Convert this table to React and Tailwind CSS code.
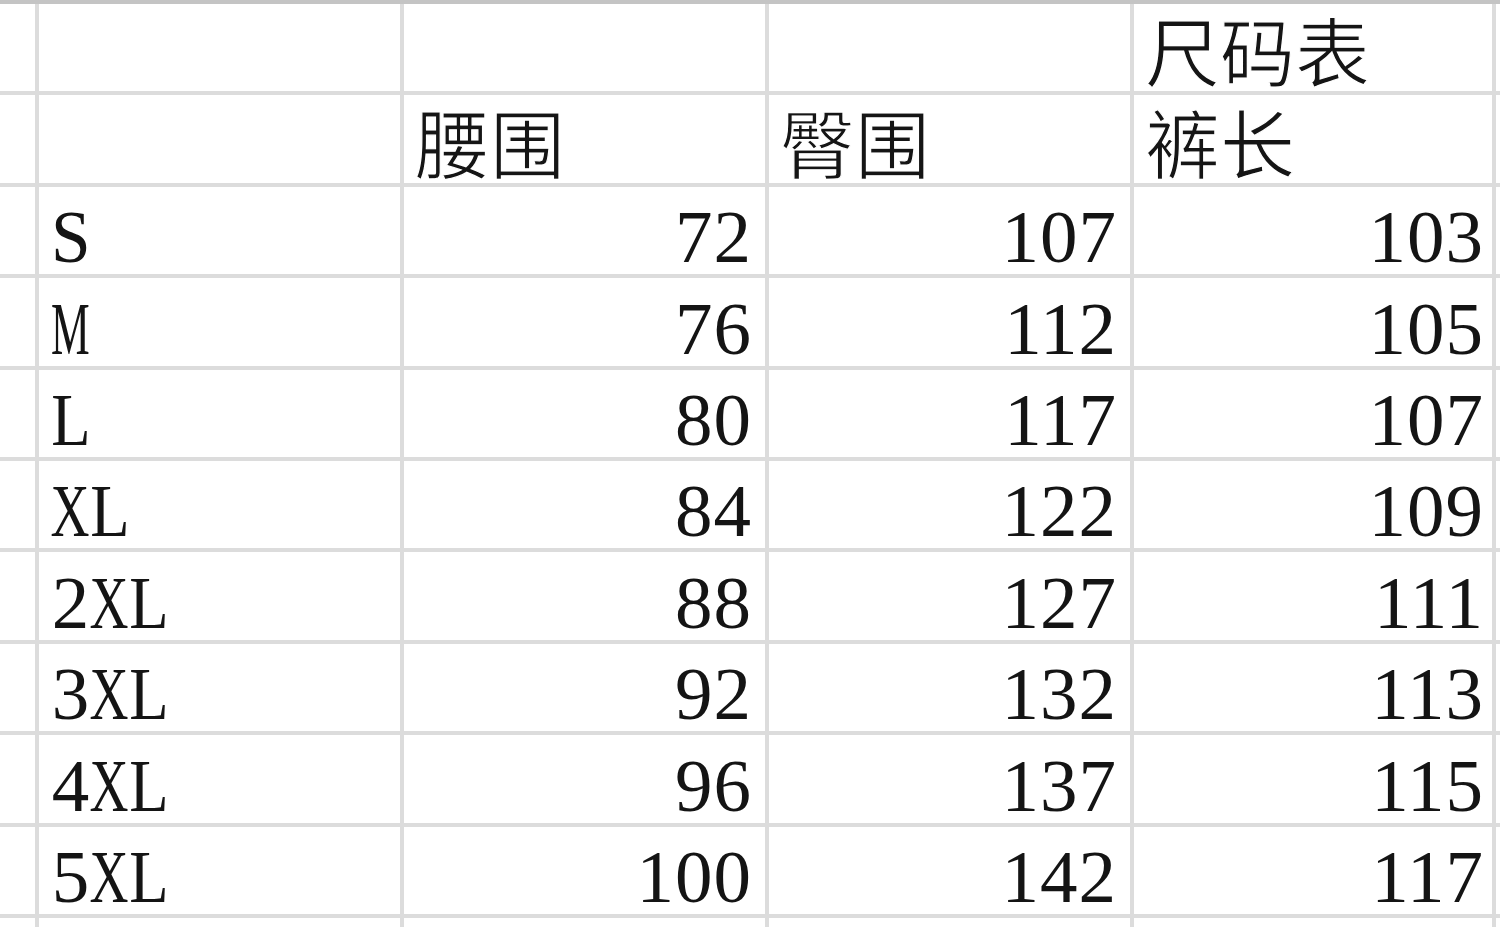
import React from "react";

const rows = [
  ["S", "72", "107", "103"],
  ["M", "76", "112", "105"],
  ["L", "80", "117", "107"],
  ["XL", "84", "122", "109"],
  ["2XL", "88", "127", "111"],
  ["3XL", "92", "132", "113"],
  ["4XL", "96", "137", "115"],
  ["5XL", "100", "142", "117"],
];

const serif = { fontFamily: '"Liberation Serif", "DejaVu Serif", serif' };
const cjk = { fontFamily: '"Noto Sans CJK SC", "Noto Sans", sans-serif' };

const letterScale = {
  S: "scale-x-[0.95]",
  M: "scale-x-[0.58]",
  L: "scale-x-[0.86]",
  X: "scale-x-[0.72]",
};

function Label({ text }) {
  return (
    <span className="flex whitespace-nowrap text-[75px] leading-none text-[#141414]" style={serif}>
      {text.split("").map((ch, i) => (
        <span key={i} className="inline-flex w-[39px] justify-center">
          <span className={"inline-block " + (letterScale[ch] || "")}>{ch}</span>
        </span>
      ))}
    </span>
  );
}

function Cell({ children, kind, last }) {
  const base = "bg-white flex items-end overflow-visible";
  if (kind === "cjk") {
    return (
      <div className={base + " pl-[11px] pb-[5px]"}>
        <span
          className="text-[75px] leading-none text-[#151515] whitespace-nowrap [-webkit-text-stroke:1.2px_white]"
          style={cjk}
        >
          {children}
        </span>
      </div>
    );
  }
  if (kind === "label") {
    return (
      <div className={base + " pl-[12px]"}>
        <Label text={children} />
      </div>
    );
  }
  if (kind === "num") {
    return (
      <div className={base + " justify-end " + (last ? "pr-[8px]" : "pr-[13px]")}>
        <span className="text-[75px] leading-none text-[#141414] whitespace-nowrap tracking-[1px]" style={serif}>
          {children}
        </span>
      </div>
    );
  }
  return <div className={base}>{children}</div>;
}

export default function App() {
  return (
    <div className="w-[1500px] h-[927px] overflow-hidden bg-white">
      <div className="h-[4px] bg-[#c4c4c4]" />
      <div className="grid grid-cols-[35px_361px_361px_361px_358px_1fr] auto-rows-[87.4px] gap-[4px] bg-[#dcdcdc] pb-[4px]">
        <Cell />
        <Cell />
        <Cell />
        <Cell />
        <Cell kind="cjk">尺码表</Cell>
        <Cell />

        <Cell />
        <Cell />
        <Cell kind="cjk">腰围</Cell>
        <Cell kind="cjk">臀围</Cell>
        <Cell kind="cjk">裤长</Cell>
        <Cell />

        {rows.map((r) => (
          <React.Fragment key={r[0]}>
            <Cell />
            <Cell kind="label">{r[0]}</Cell>
            <Cell kind="num">{r[1]}</Cell>
            <Cell kind="num">{r[2]}</Cell>
            <Cell kind="num" last>{r[3]}</Cell>
            <Cell />
          </React.Fragment>
        ))}

        <Cell />
        <Cell />
        <Cell />
        <Cell />
        <Cell />
        <Cell />
      </div>
    </div>
  );
}
